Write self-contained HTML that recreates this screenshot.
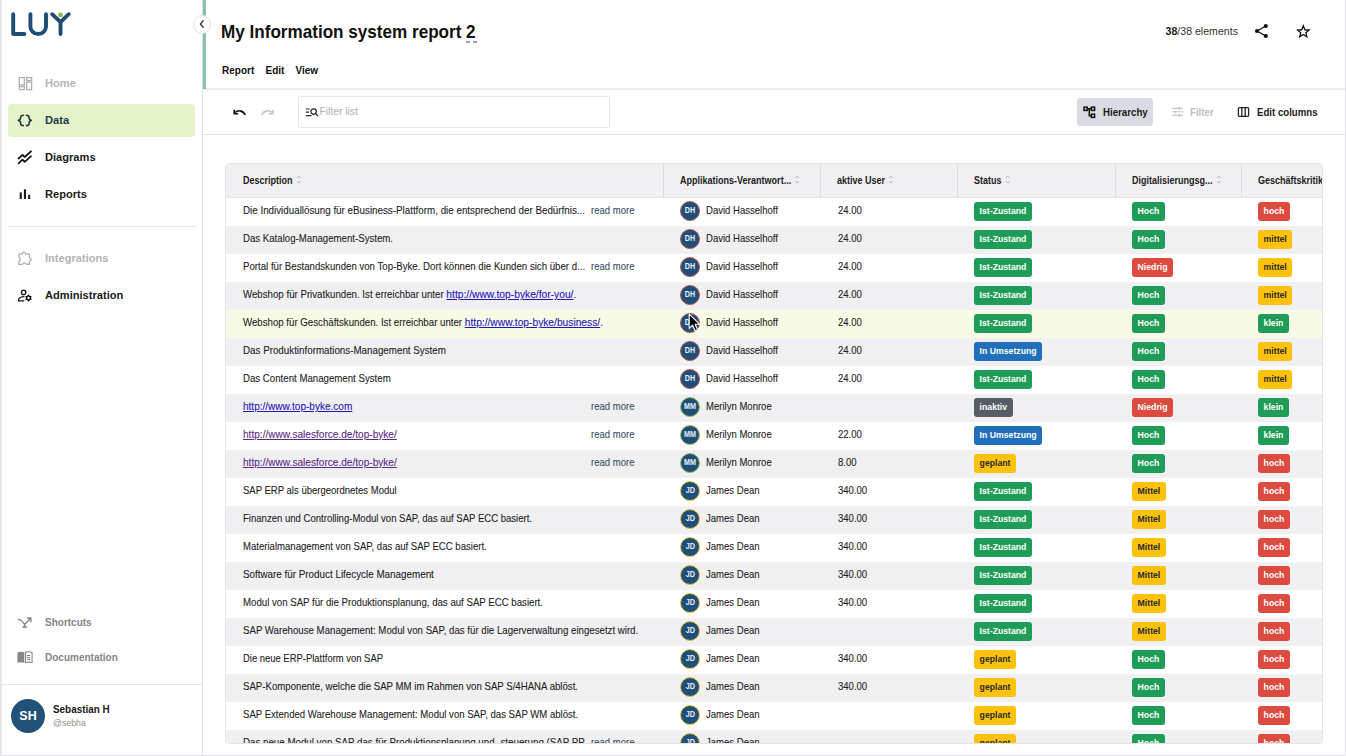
<!DOCTYPE html>
<html><head><meta charset="utf-8">
<style>
*{box-sizing:border-box;margin:0;padding:0}
html,body{width:1346px;height:756px;overflow:hidden;background:#fff;font-family:"Liberation Sans",sans-serif;color:#1a1a1a}
.abs{position:absolute}
#lstrip{left:0;top:0;width:2px;height:756px;background:#e6e6ea}
#rstrip{left:1345px;top:0;width:1px;height:756px;background:#e2e2e6}
#bstrip{left:0;top:755px;width:1346px;height:1px;background:#e2e2e6}
#sbborder{left:202px;top:0;width:1px;height:756px;background:#e0e0e4}
#green{left:203px;top:0;width:3px;height:89px;background:#85c3a0}
.nav{position:absolute;left:45px;font-weight:bold;font-size:11.1px;line-height:14px;white-space:nowrap}
.nav svg{position:absolute}
#datahl{left:8.3px;top:104px;width:186.7px;height:32.8px;background:#e6f2c8;border-radius:4px}
.hline{position:absolute;height:1px;background:#e4e4e8}

#tbl{left:225px;top:163px;width:1098px;height:581px;border:1px solid #e3e3e7;border-radius:4px;overflow:hidden;background:#fff}
#tbl .th{position:absolute;background:#f0f0f2}
#tbl .hb{position:absolute;left:0;top:33px;width:1096px;height:1px;background:#e6e6ea}
#tbl .sep{position:absolute;top:0;width:1px;height:34px;background:#dedee2}
#tbl .ht{position:absolute;top:11px;font-weight:bold;font-size:10.3px;line-height:11px;white-space:nowrap;color:#1c1c1c;transform:scaleX(0.875);transform-origin:0 0}
#tbl .sa{position:absolute;top:11px}
#tbl .sa path{fill:none;stroke:#b4b4b8;stroke-width:0.9}
#tbl .row{position:absolute;left:0;width:1096px;height:28px;background:#fff}
#tbl .row.alt{background:#f0f0f2}
#tbl .row.hov{background:#f7fbe6}
#tbl .tx{position:absolute;top:7px;-webkit-text-stroke:0.1px currentColor;font-size:10.4px;line-height:11px;white-space:nowrap;color:#1e1e1e;transform:scaleX(0.918);transform-origin:0 0}
#tbl .tx.rm{color:#3a5262}
#tbl a.lk{color:#1f14b8;text-decoration:underline;font-size:11px}
#tbl a.lk.vis{color:#5b2a86}
#tbl .av{position:absolute;top:3px;width:20px;height:20px;border-radius:50%;border:1.8px solid;background:#1f4e78;color:#e8eef5;font-weight:bold;font-size:8.4px;line-height:17.3px;text-align:center;white-space:nowrap}
#tbl .av i{font-style:normal;display:inline-block;transform:scaleX(0.86)}
#tbl .bd{position:absolute;top:4px;height:19px;padding:0 5.6px;border-radius:3px;font-weight:bold;font-size:8.7px;line-height:19px;white-space:nowrap;color:#fff}
#tbl .bd.g{background:#1f9d58}
#tbl .bd.r{background:#dd4a3f}
#tbl .bd.y{background:#fcc20e;color:#2a2a2a}
#tbl .bd.b{background:#1f6fba}
#tbl .bd.k{background:#565d66}
</style></head><body>
<div id="lstrip" class="abs"></div>
<div id="rstrip" class="abs"></div>
<div id="bstrip" class="abs"></div>

<!-- SIDEBAR -->
<svg class="abs" style="left:8px;top:9px" width="66" height="30" viewBox="0 0 66 30">
  <g fill="none" stroke="#1f4d74" stroke-width="3.9" stroke-linecap="round" stroke-linejoin="round">
    <path d="M5.2 5.2 V25 H16.4"/>
    <path d="M22.4 5.2 V17.4 a7.8 7.6 0 0 0 15.6 0 V5.2"/>
    <path d="M44.2 5.2 L52.5 13.2 L60.7 5.2 M52.5 13.2 V25"/>
  </g>
  <circle cx="52.5" cy="5.9" r="2.4" fill="#8bb44a"/>
</svg>

<div id="datahl" class="abs"></div>
<div class="nav" style="top:76px;color:#b3b3b3">Home</div>
<svg class="abs" style="left:18px;top:76px" width="15" height="15" viewBox="0 0 15 15" fill="none" stroke="#b0b0b0" stroke-width="1.3">
  <rect x="1.3" y="1.6" width="5" height="7.4"/><rect x="1.3" y="10.6" width="5" height="3"/>
  <rect x="8.6" y="1.6" width="5" height="3"/><rect x="8.6" y="6.2" width="5" height="7.4"/>
</svg>
<div class="nav" style="top:113px;color:#1b3c4e">Data</div>
<svg class="abs" style="left:17px;top:113px" width="17" height="14" viewBox="0 0 17 14" fill="none" stroke="#1b3c4e" stroke-width="1.6" stroke-linecap="round" stroke-linejoin="round">
  <path d="M6.3 2.2 C4.1 2.2 3.6 3 3.6 4.6 C3.6 6.4 3.2 7.2 1.3 7.4 C3.2 7.6 3.6 8.4 3.6 10.2 C3.6 11.8 4.1 12.6 6.3 12.6"/>
  <path d="M9.4 2.2 C11.6 2.2 12.1 3 12.1 4.6 C12.1 6.4 12.5 7.2 14.4 7.4 C12.5 7.6 12.1 8.4 12.1 10.2 C12.1 11.8 11.6 12.6 9.4 12.6"/>
</svg>
<div class="nav" style="top:150px;color:#1a1a1a">Diagrams</div>
<svg class="abs" style="left:17px;top:150px" width="16" height="15" viewBox="0 0 16 15" fill="none" stroke="#111" stroke-width="1.75" stroke-linecap="round" stroke-linejoin="round">
  <path d="M1.5 8.5 L5.5 4.8 L7.7 7 L14 1.3"/>
  <path d="M1.5 13.4 L5.5 9.7 L7.7 11.9 L14 6.2"/>
</svg>
<div class="nav" style="top:187px;color:#1a1a1a">Reports</div>
<svg class="abs" style="left:19px;top:188px" width="12" height="12" viewBox="0 0 12 12" fill="#1a1a1a">
  <rect x="0.7" y="4.4" width="2.1" height="6.6"/><rect x="4.9" y="1.3" width="2.1" height="9.7"/><rect x="9.1" y="6.8" width="2.1" height="4.2"/>
</svg>
<div class="hline" style="left:8px;top:226px;width:188px"></div>
<div class="nav" style="top:251px;color:#b3b3b3">Integrations</div>
<svg class="abs" style="left:17px;top:250px" width="16" height="16" viewBox="0 0 16 16" fill="none" stroke="#b0b0b0" stroke-width="1.25" stroke-linejoin="round">
  <path d="M1.8 3.8 H5.6 C5.4 1.6 8.6 1.6 8.4 3.8 H12.4 V7.9 C14.6 7.7 14.6 11 12.4 10.8 V14.4 H9.4 C9.6 12.3 5.4 12.3 5.6 14.4 H1.8 V11.2 C3.6 11.3 3.6 7 1.8 7.1 Z"/>
</svg>
<div class="nav" style="top:288px;color:#1a1a1a">Administration</div>
<svg class="abs" style="left:17px;top:288px" width="16" height="16" viewBox="0 0 16 16" fill="none" stroke="#111" stroke-width="1.3" stroke-linecap="round" stroke-linejoin="round">
  <circle cx="6.6" cy="4.4" r="2.2"/>
  <path d="M7 8.7 C4.2 8.9 1.4 10 1.4 12.8 H6.8"/>
  <path d="M11.50 6.30 L10.25 7.83 L8.30 8.15 L9.00 10.00 L8.30 11.85 L10.25 12.17 L11.50 13.70 L12.75 12.17 L14.70 11.85 L14.00 10.00 L14.70 8.15 L12.75 7.83 Z" fill="#111" stroke="none"/>
  <circle cx="11.5" cy="10" r="1.2" fill="#fff" stroke="none"/>
</svg>

<div class="nav" style="top:616.3px;color:#858585;font-size:10px">Shortcuts</div>
<svg class="abs" style="left:17px;top:617px" width="16" height="12" viewBox="0 0 16 12" fill="none" stroke="#858585" stroke-width="1.4" stroke-linecap="round" stroke-linejoin="round">
  <path d="M1.1 2.4 C3.6 2.6 5.8 4.6 7.6 7.6 V9.9 M7.6 7.6 L13.9 1 M10.2 1 H13.9 V4.8 M5.8 10 H9.6"/>
</svg>
<div class="nav" style="top:650.5px;color:#858585;font-size:10px">Documentation</div>
<svg class="abs" style="left:17px;top:651px" width="16" height="12" viewBox="0 0 16 12">
  <path d="M0.4 1.4 C2.5 0.5 5 0.5 7.3 1.3 V11.8 C5 11 2.5 11 0.4 11.8 Z" fill="#888"/>
  <path d="M8.6 1.3 C10.9 0.5 13.3 0.5 15.1 1.4 V11.8 C13.3 11 10.9 11 8.6 11.8 Z" fill="#fff" stroke="#888" stroke-width="1.1"/>
  <path d="M10 4.5 H13.2 M10 6.5 H13.2 M10 8.5 H13.2" stroke="#7c7c7c" stroke-width="1"/>
</svg>
<div class="hline" style="left:2px;top:684px;width:200px"></div>
<div class="abs" style="left:11px;top:698.5px;width:34px;height:34px;border-radius:50%;background:#1f5276;color:#fff;font-weight:bold;font-size:12.5px;line-height:35.5px;text-align:center">SH</div>
<div class="abs" style="left:53px;top:704px;font-weight:bold;font-size:10.1px;transform:scaleX(0.98);transform-origin:0 0;white-space:nowrap;color:#1a1a1a">Sebastian H</div>
<div class="abs" style="left:53px;top:718px;font-size:8.8px;white-space:nowrap;color:#8f8f8f">@sebha</div>


<!-- HEADER -->
<div class="abs" style="left:221px;top:22.2px;font-weight:bold;font-size:18.1px;line-height:20px;white-space:nowrap;color:#111;transform:scaleX(0.945);transform-origin:0 0">My Information system report 2</div>
<div class="abs" style="left:466px;top:41px;width:4.2px;height:1.5px;background:#9d96dc"></div><div class="abs" style="left:473.2px;top:41px;width:4.2px;height:1.5px;background:#9d96dc"></div>
<div class="abs" style="left:222px;top:64.5px;font-weight:bold;font-size:10px;line-height:12px;white-space:nowrap;color:#111">Report</div>
<div class="abs" style="left:265.5px;top:64.5px;font-weight:bold;font-size:10px;line-height:12px;white-space:nowrap;color:#111">Edit</div>
<div class="abs" style="left:295.5px;top:64.5px;font-weight:bold;font-size:10px;line-height:12px;white-space:nowrap;color:#111">View</div>
<div class="abs" style="left:1165.5px;top:25px;font-size:10.6px;line-height:12px;white-space:nowrap;color:#333"><b style="color:#222">38</b>/38 elements</div>
<svg class="abs" style="left:1254px;top:23px" width="15" height="16" viewBox="0 0 15 16" fill="#111">
  <circle cx="11.8" cy="3" r="2.1"/><circle cx="3" cy="8" r="2.1"/><circle cx="11.8" cy="13" r="2.1"/>
  <path d="M3 8 L11.8 3 M3 8 L11.8 13" stroke="#111" stroke-width="1.4"/>
</svg>
<svg class="abs" style="left:1296px;top:24px" width="15" height="15" viewBox="0 0 15 15" fill="none" stroke="#111" stroke-width="1.3" stroke-linejoin="miter">
  <path d="M7.30 1.80 L5.74 5.76 L1.50 6.01 L4.78 8.72 L3.71 12.84 L7.30 10.55 L10.89 12.84 L9.82 8.72 L13.10 6.01 L8.86 5.76 Z"/>
</svg>
<div class="hline" style="left:203px;top:88px;width:1142px;height:2px;background:#ececef"></div>

<!-- TOOLBAR -->
<svg class="abs" style="left:232px;top:107.5px" width="16" height="12" viewBox="0 0 16 12" fill="none" stroke="#111" stroke-width="1.6" stroke-linecap="butt">
  <path d="M3 4.5 C6 1.8 10.5 2 13.4 6.8"/>
  <path d="M2.2 1.8 V5.8 H6.2" stroke-linejoin="miter"/>
</svg>
<svg class="abs" style="left:259px;top:107.5px" width="16" height="12" viewBox="0 0 16 12" fill="none" stroke="#c4c4c4" stroke-width="1.6">
  <path d="M13 4.5 C10 1.8 5.5 2 2.6 6.8"/>
  <path d="M13.8 1.8 V5.8 H9.8"/>
</svg>
<div class="abs" style="left:298px;top:96px;width:312px;height:32px;border:1px solid #e4e4e8;border-radius:2px"></div>
<svg class="abs" style="left:305px;top:107px" width="14" height="11" viewBox="0 0 14 11" fill="none" stroke="#222" stroke-width="1.2">
  <path d="M0.8 2 H4.5 M0.8 5.2 H4 M0.8 8.6 H6.5"/>
  <circle cx="8.6" cy="4.6" r="2.7"/><path d="M10.6 6.6 L13 9.2"/>
</svg>
<div class="abs" style="left:319.5px;top:106px;font-size:10.3px;line-height:12px;white-space:nowrap;color:#b0b0b0">Filter list</div>

<div class="abs" style="left:1077px;top:98px;width:76px;height:27.5px;background:#d8dce2;border-radius:3px"></div>
<svg class="abs" style="left:1083px;top:106px" width="13" height="13" viewBox="0 0 13 13" fill="none" stroke="#111" stroke-width="1.5">
  <rect x="1" y="1.2" width="3.2" height="3.2"/><rect x="8.4" y="1.2" width="3.2" height="3.2"/><rect x="8.4" y="8.2" width="3.2" height="3.2"/>
  <path d="M4.2 2.8 H8.4 M6.3 2.8 V9.8 H8.4"/>
</svg>
<div class="abs" style="left:1102.5px;top:107px;font-weight:bold;font-size:10.2px;line-height:12px;white-space:nowrap;color:#1a1a1a;transform:scaleX(0.951);transform-origin:0 0">Hierarchy</div>
<svg class="abs" style="left:1171px;top:105px" width="13" height="13" viewBox="0 0 13 13" fill="none" stroke="#c6c6c6" stroke-width="1.1">
  <path d="M1 3.4 H12 M1 6.8 H12 M1 10.4 H12"/>
  <path d="M8.3 1.8 V5 M4.2 5.2 V8.4 M8.3 8.8 V12" stroke-width="1.3"/>
</svg>
<div class="abs" style="left:1190px;top:107px;font-weight:bold;font-size:10.2px;line-height:12px;white-space:nowrap;color:#bdbdbd;transform:scaleX(0.951);transform-origin:0 0">Filter</div>
<svg class="abs" style="left:1237px;top:105px" width="13" height="13" viewBox="0 0 13 13" fill="none" stroke="#222" stroke-width="1.3">
  <rect x="1.4" y="2.6" width="10.2" height="8.8" rx="1.2"/><path d="M4.8 2.6 V11.4 M8.2 2.6 V11.4"/>
</svg>
<div class="abs" style="left:1256.5px;top:107px;font-weight:bold;font-size:10.2px;line-height:12px;white-space:nowrap;color:#1a1a1a;transform:scaleX(0.946);transform-origin:0 0">Edit columns</div>
<div class="hline" style="left:203px;top:134px;width:1142px;height:1px;background:#e4e4e8"></div>

<!--TABLE-->
<div id="tbl" class="abs">
<div class="th" style="left:0;top:0;width:1096px;height:34px"></div>
<div class="ht" style="left:16.7px">Description</div>
<div class="sep" style="left:437px"></div>
<div class="ht" style="left:453.7px">Applikations-Verantwort...</div>
<div class="sep" style="left:594px"></div>
<div class="ht" style="left:610.7px">aktive User</div>
<div class="sep" style="left:731px"></div>
<div class="ht" style="left:747.7px">Status</div>
<div class="sep" style="left:889px"></div>
<div class="ht" style="left:905.7px">Digitalisierungsg...</div>
<div class="sep" style="left:1015px"></div>
<div class="ht" style="left:1031.7px">Geschäftskritik</div>
<svg class="sa" style="left:69.7px" width="6" height="9" viewBox="0 0 6 9"><path d="M1 3 L3 1.2 L5 3 M1 6 L3 7.8 L5 6"/></svg>
<svg class="sa" style="left:568.2px" width="6" height="9" viewBox="0 0 6 9"><path d="M1 3 L3 1.2 L5 3 M1 6 L3 7.8 L5 6"/></svg>
<svg class="sa" style="left:662.2px" width="6" height="9" viewBox="0 0 6 9"><path d="M1 3 L3 1.2 L5 3 M1 6 L3 7.8 L5 6"/></svg>
<svg class="sa" style="left:778.7px" width="6" height="9" viewBox="0 0 6 9"><path d="M1 3 L3 1.2 L5 3 M1 6 L3 7.8 L5 6"/></svg>
<svg class="sa" style="left:989.7px" width="6" height="9" viewBox="0 0 6 9"><path d="M1 3 L3 1.2 L5 3 M1 6 L3 7.8 L5 6"/></svg>
<div class="hb"></div>
<div class="row" style="top:34px">
<div class="tx" style="left:16.7px;transform:scaleX(0.9428)">Die Individuallösung für eBusiness-Plattform, die entsprechend der Bedürfnis...</div>
<div class="tx rm" style="left:365px">read more</div>
<div class="av" style="left:454px;border-color:#bd5448"><i>DH</i></div>
<div class="tx" style="left:479.6px">David Hasselhoff</div>
<div class="tx" style="left:611.5px">24.00</div>
<div class="bd g" style="left:748px">Ist-Zustand</div>
<div class="bd g" style="left:906px">Hoch</div>
<div class="bd r" style="left:1032px">hoch</div>
</div>
<div class="row alt" style="top:62px">
<div class="tx" style="left:16.7px;transform:scaleX(0.9279)">Das Katalog-Management-System.</div>
<div class="av" style="left:454px;border-color:#bd5448"><i>DH</i></div>
<div class="tx" style="left:479.6px">David Hasselhoff</div>
<div class="tx" style="left:611.5px">24.00</div>
<div class="bd g" style="left:748px">Ist-Zustand</div>
<div class="bd g" style="left:906px">Hoch</div>
<div class="bd y" style="left:1032px">mittel</div>
</div>
<div class="row" style="top:90px">
<div class="tx" style="left:16.7px;transform:scaleX(0.9289)">Portal für Bestandskunden von Top-Byke. Dort können die Kunden sich über d...</div>
<div class="tx rm" style="left:365px">read more</div>
<div class="av" style="left:454px;border-color:#bd5448"><i>DH</i></div>
<div class="tx" style="left:479.6px">David Hasselhoff</div>
<div class="tx" style="left:611.5px">24.00</div>
<div class="bd g" style="left:748px">Ist-Zustand</div>
<div class="bd r" style="left:906px">Niedrig</div>
<div class="bd y" style="left:1032px">mittel</div>
</div>
<div class="row alt" style="top:118px">
<div class="tx" style="left:16.7px;transform:scaleX(0.9323)">Webshop für Privatkunden. Ist erreichbar unter <a class="lk">http://www.top-byke/for-you/</a>.</div>
<div class="av" style="left:454px;border-color:#bd5448"><i>DH</i></div>
<div class="tx" style="left:479.6px">David Hasselhoff</div>
<div class="tx" style="left:611.5px">24.00</div>
<div class="bd g" style="left:748px">Ist-Zustand</div>
<div class="bd g" style="left:906px">Hoch</div>
<div class="bd y" style="left:1032px">mittel</div>
</div>
<div class="row hov" style="top:146px">
<div class="tx" style="left:16.7px;transform:scaleX(0.9304)">Webshop für Geschäftskunden. Ist erreichbar unter <a class="lk">http://www.top-byke/business/</a>.</div>
<div class="av" style="left:454px;border-color:#bd5448"><i>DH</i></div>
<div class="tx" style="left:479.6px">David Hasselhoff</div>
<div class="tx" style="left:611.5px">24.00</div>
<div class="bd g" style="left:748px">Ist-Zustand</div>
<div class="bd g" style="left:906px">Hoch</div>
<div class="bd g" style="left:1032px">klein</div>
</div>
<div class="row alt" style="top:174px">
<div class="tx" style="left:16.7px;transform:scaleX(0.9421)">Das Produktinformations-Management System</div>
<div class="av" style="left:454px;border-color:#bd5448"><i>DH</i></div>
<div class="tx" style="left:479.6px">David Hasselhoff</div>
<div class="tx" style="left:611.5px">24.00</div>
<div class="bd b" style="left:748px">In Umsetzung</div>
<div class="bd g" style="left:906px">Hoch</div>
<div class="bd y" style="left:1032px">mittel</div>
</div>
<div class="row" style="top:202px">
<div class="tx" style="left:16.7px;transform:scaleX(0.9299)">Das Content Management System</div>
<div class="av" style="left:454px;border-color:#bd5448"><i>DH</i></div>
<div class="tx" style="left:479.6px">David Hasselhoff</div>
<div class="tx" style="left:611.5px">24.00</div>
<div class="bd g" style="left:748px">Ist-Zustand</div>
<div class="bd g" style="left:906px">Hoch</div>
<div class="bd y" style="left:1032px">mittel</div>
</div>
<div class="row alt" style="top:230px">
<div class="tx" style="left:16.7px;transform:scaleX(0.9122)"><a class="lk">http://www.top-byke.com</a></div>
<div class="tx rm" style="left:365px">read more</div>
<div class="av" style="left:454px;border-color:#9cc452"><i>MM</i></div>
<div class="tx" style="left:479.6px">Merilyn Monroe</div>
<div class="bd k" style="left:748px">inaktiv</div>
<div class="bd r" style="left:906px">Niedrig</div>
<div class="bd g" style="left:1032px">klein</div>
</div>
<div class="row" style="top:258px">
<div class="tx" style="left:16.7px;transform:scaleX(0.918)"><a class="lk vis">http://www.salesforce.de/top-byke/</a></div>
<div class="tx rm" style="left:365px">read more</div>
<div class="av" style="left:454px;border-color:#9cc452"><i>MM</i></div>
<div class="tx" style="left:479.6px">Merilyn Monroe</div>
<div class="tx" style="left:611.5px">22.00</div>
<div class="bd b" style="left:748px">In Umsetzung</div>
<div class="bd g" style="left:906px">Hoch</div>
<div class="bd g" style="left:1032px">klein</div>
</div>
<div class="row alt" style="top:286px">
<div class="tx" style="left:16.7px;transform:scaleX(0.918)"><a class="lk vis">http://www.salesforce.de/top-byke/</a></div>
<div class="tx rm" style="left:365px">read more</div>
<div class="av" style="left:454px;border-color:#9cc452"><i>MM</i></div>
<div class="tx" style="left:479.6px">Merilyn Monroe</div>
<div class="tx" style="left:611.5px">8.00</div>
<div class="bd y" style="left:748px">geplant</div>
<div class="bd g" style="left:906px">Hoch</div>
<div class="bd r" style="left:1032px">hoch</div>
</div>
<div class="row" style="top:314px">
<div class="tx" style="left:16.7px;transform:scaleX(0.9162)">SAP ERP als übergeordnetes Modul</div>
<div class="av" style="left:454px;border-color:#efbf3c"><i>JD</i></div>
<div class="tx" style="left:479.6px">James Dean</div>
<div class="tx" style="left:611.5px">340.00</div>
<div class="bd g" style="left:748px">Ist-Zustand</div>
<div class="bd y" style="left:906px">Mittel</div>
<div class="bd r" style="left:1032px">hoch</div>
</div>
<div class="row alt" style="top:342px">
<div class="tx" style="left:16.7px;transform:scaleX(0.9193)">Finanzen und Controlling-Modul von SAP, das auf SAP ECC basiert.</div>
<div class="av" style="left:454px;border-color:#efbf3c"><i>JD</i></div>
<div class="tx" style="left:479.6px">James Dean</div>
<div class="tx" style="left:611.5px">340.00</div>
<div class="bd g" style="left:748px">Ist-Zustand</div>
<div class="bd y" style="left:906px">Mittel</div>
<div class="bd r" style="left:1032px">hoch</div>
</div>
<div class="row" style="top:370px">
<div class="tx" style="left:16.7px;transform:scaleX(0.9206)">Materialmanagement von SAP, das auf SAP ECC basiert.</div>
<div class="av" style="left:454px;border-color:#efbf3c"><i>JD</i></div>
<div class="tx" style="left:479.6px">James Dean</div>
<div class="tx" style="left:611.5px">340.00</div>
<div class="bd g" style="left:748px">Ist-Zustand</div>
<div class="bd y" style="left:906px">Mittel</div>
<div class="bd r" style="left:1032px">hoch</div>
</div>
<div class="row alt" style="top:398px">
<div class="tx" style="left:16.7px;transform:scaleX(0.9468)">Software für Product Lifecycle Management</div>
<div class="av" style="left:454px;border-color:#efbf3c"><i>JD</i></div>
<div class="tx" style="left:479.6px">James Dean</div>
<div class="tx" style="left:611.5px">340.00</div>
<div class="bd g" style="left:748px">Ist-Zustand</div>
<div class="bd y" style="left:906px">Mittel</div>
<div class="bd r" style="left:1032px">hoch</div>
</div>
<div class="row" style="top:426px">
<div class="tx" style="left:16.7px;transform:scaleX(0.9285)">Modul von SAP für die Produktionsplanung, das auf SAP ECC basiert.</div>
<div class="av" style="left:454px;border-color:#efbf3c"><i>JD</i></div>
<div class="tx" style="left:479.6px">James Dean</div>
<div class="tx" style="left:611.5px">340.00</div>
<div class="bd g" style="left:748px">Ist-Zustand</div>
<div class="bd y" style="left:906px">Mittel</div>
<div class="bd r" style="left:1032px">hoch</div>
</div>
<div class="row alt" style="top:454px">
<div class="tx" style="left:16.7px;transform:scaleX(0.93)">SAP Warehouse Management: Modul von SAP, das für die Lagerverwaltung eingesetzt wird.</div>
<div class="av" style="left:454px;border-color:#efbf3c"><i>JD</i></div>
<div class="tx" style="left:479.6px">James Dean</div>
<div class="bd g" style="left:748px">Ist-Zustand</div>
<div class="bd y" style="left:906px">Mittel</div>
<div class="bd r" style="left:1032px">hoch</div>
</div>
<div class="row" style="top:482px">
<div class="tx" style="left:16.7px;transform:scaleX(0.9077)">Die neue ERP-Plattform von SAP</div>
<div class="av" style="left:454px;border-color:#efbf3c"><i>JD</i></div>
<div class="tx" style="left:479.6px">James Dean</div>
<div class="tx" style="left:611.5px">340.00</div>
<div class="bd y" style="left:748px">geplant</div>
<div class="bd g" style="left:906px">Hoch</div>
<div class="bd r" style="left:1032px">hoch</div>
</div>
<div class="row alt" style="top:510px">
<div class="tx" style="left:16.7px;transform:scaleX(0.9277)">SAP-Komponente, welche die SAP MM im Rahmen von SAP S/4HANA ablöst.</div>
<div class="av" style="left:454px;border-color:#efbf3c"><i>JD</i></div>
<div class="tx" style="left:479.6px">James Dean</div>
<div class="tx" style="left:611.5px">340.00</div>
<div class="bd y" style="left:748px">geplant</div>
<div class="bd g" style="left:906px">Hoch</div>
<div class="bd r" style="left:1032px">hoch</div>
</div>
<div class="row" style="top:538px">
<div class="tx" style="left:16.7px;transform:scaleX(0.9221)">SAP Extended Warehouse Management: Modul von SAP, das SAP WM ablöst.</div>
<div class="av" style="left:454px;border-color:#efbf3c"><i>JD</i></div>
<div class="tx" style="left:479.6px">James Dean</div>
<div class="bd y" style="left:748px">geplant</div>
<div class="bd g" style="left:906px">Hoch</div>
<div class="bd r" style="left:1032px">hoch</div>
</div>
<div class="row alt" style="top:566px">
<div class="tx" style="left:16.7px;transform:scaleX(0.9372)">Das neue Modul von SAP das für Produktionsplanung und -steuerung (SAP PP...</div>
<div class="tx rm" style="left:365px">read more</div>
<div class="av" style="left:454px;border-color:#efbf3c"><i>JD</i></div>
<div class="tx" style="left:479.6px">James Dean</div>
<div class="bd y" style="left:748px">geplant</div>
<div class="bd g" style="left:906px">Hoch</div>
<div class="bd r" style="left:1032px">hoch</div>
</div>
</div>
<!--/TABLE-->
<svg class="abs" style="left:688px;top:313px" width="14" height="20" viewBox="0 0 14 20">
  <path d="M1.2 1.2 L1.2 15.4 L4.6 12.2 L7.2 18 L9.6 17 L7.1 11.3 L11.8 11.3 Z" fill="#000" stroke="#fff" stroke-width="1.1" stroke-linejoin="round"/>
</svg>
<div id="sbborder" class="abs"></div>
<div id="green" class="abs"></div>
<div class="abs" style="left:192.8px;top:15.2px;width:18.5px;height:18.5px;border-radius:50%;background:#fff;border:1px solid #e2e2e6"></div>
<svg class="abs" style="left:198px;top:19px" width="8" height="10" viewBox="0 0 8 10" fill="none" stroke="#27435a" stroke-width="1.4" stroke-linecap="round" stroke-linejoin="round"><path d="M5.2 1.8 L2.4 5 L5.2 8.2"/></svg>

</body></html>
